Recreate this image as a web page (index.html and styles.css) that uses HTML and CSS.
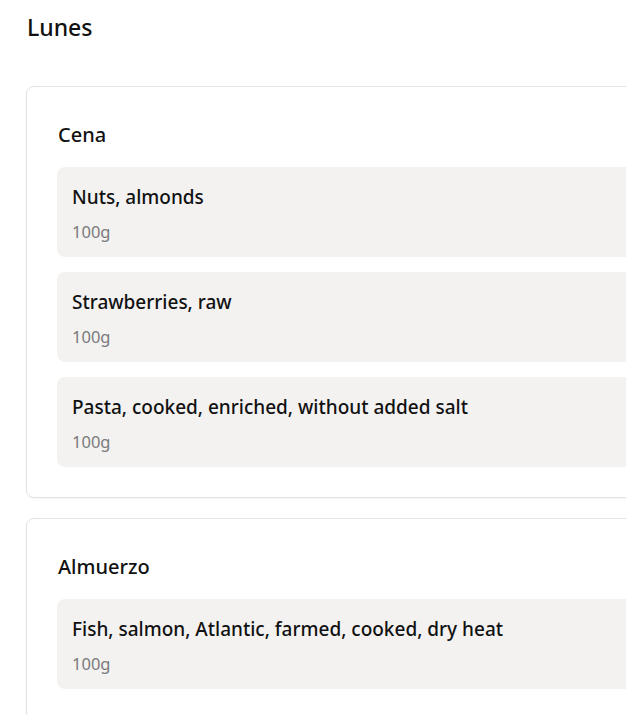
FILE: index.html
```html
<!DOCTYPE html>
<html lang="es">
<head>
<meta charset="utf-8">
<title>Lunes</title>
<link rel="stylesheet" href="styles.css">
</head>
<body>
<main class="page">
  <h1 class="day-title">Lunes</h1>
  <section class="meal">
    <h2 class="meal-title">Cena</h2>
    <ul class="foods">
      <li class="food"><div class="food-name">Nuts, almonds</div><div class="food-qty">100g</div></li>
      <li class="food"><div class="food-name">Strawberries, raw</div><div class="food-qty">100g</div></li>
      <li class="food"><div class="food-name">Pasta, cooked, enriched, without added salt</div><div class="food-qty">100g</div></li>
    </ul>
  </section>
  <section class="meal">
    <h2 class="meal-title">Almuerzo</h2>
    <ul class="foods">
      <li class="food"><div class="food-name">Fish, salmon, Atlantic, farmed, cooked, dry heat</div><div class="food-qty">100g</div></li>
    </ul>
  </section>
</main>
</body>
</html>
```
FILE: styles.css
```css
html, body {
  margin: 0;
  padding: 0;
  overflow: hidden;
  background: #ffffff;
}
body {
  font-family: "Noto Sans", "Open Sans", sans-serif;
  color: #111111;
}
.page {
  padding: 11px 0 0 26px;
  width: 760px;
}
.day-title {
  margin: 0 0 43px 1px;
  font-size: 23px;
  line-height: 32px;
  font-weight: 500;
}
.meal {
  border: 1px solid #e3e3e3;
  border-radius: 8px;
  padding: 30px;
  margin-bottom: 20px;
  box-shadow: 0 1px 2px rgba(0,0,0,0.04);
}
.meal-title {
  margin: 4px 0 18px 1px;
  font-size: 20px;
  line-height: 28px;
  font-weight: 500;
}
.foods {
  list-style: none;
  margin: 0;
  padding: 0;
  display: flex;
  flex-direction: column;
  gap: 15px;
}
.food {
  background: #f3f2f1;
  border-radius: 8px;
  padding: 16px 15px 13px;
  height: 90px;
  box-sizing: border-box;
}
.food-name {
  font-size: 19px;
  line-height: 28px;
  font-weight: 500;
}
.food-qty {
  margin-top: 9px;
  font-size: 16.5px;
  line-height: 24px;
  color: #7a7a7a;
}
```
